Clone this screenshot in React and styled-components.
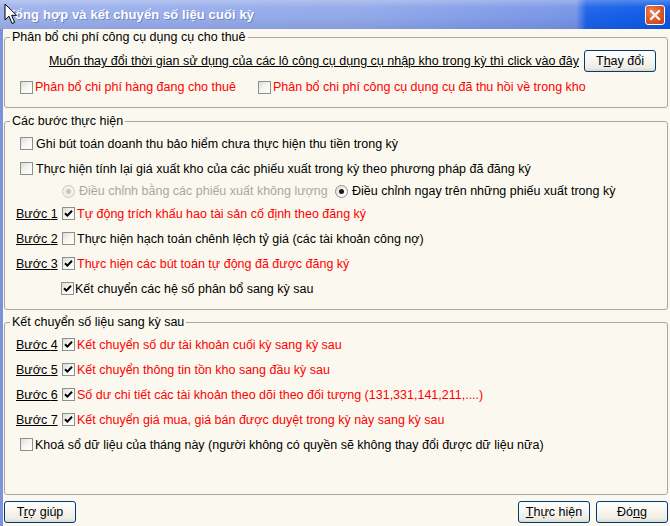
import React from 'react'
import styled, { createGlobalStyle } from 'styled-components'

const GlobalStyle = createGlobalStyle`
  html, body {
    margin: 0;
    padding: 0;
    background: #fbf9ef;
  }
`

const Win = styled.div`
  position: relative;
  width: 670px;
  height: 526px;
  overflow: hidden;
  display: flex;
  flex-direction: column;
  background: #fbf9ef;
  font-family: 'Liberation Sans', Arial, sans-serif;
  font-size: 12.5px;
  color: #000;
`

const TitleBar = styled.div`
  height: 29px;
  flex: none;
  display: flex;
  align-items: center;
  justify-content: space-between;
  padding: 0 5px 0 7px;
  box-sizing: border-box;
  background:
    linear-gradient(to bottom, rgba(255, 255, 255, 0.28) 0%, rgba(255, 255, 255, 0.05) 25%, rgba(0, 0, 0, 0) 60%, rgba(0, 0, 40, 0.08) 100%),
    linear-gradient(to right, #9db2ec 0%, #91a8e9 55%, #7794e6 86%, #1c62e8 87.5%, #0a58e6 100%);
`

const TitleText = styled.div`
  font-weight: bold;
  font-size: 13px;
  color: #fff;
  text-shadow: 1px 1px 0 rgba(30, 50, 130, 0.35);
  letter-spacing: 0.1px;
`

const CloseBtn = styled.div`
  width: 20px;
  height: 20px;
  box-sizing: border-box;
  border: 1px solid #fff;
  border-radius: 3px;
  background: radial-gradient(circle at 35% 35%, #ef8a63 0%, #e05a2c 45%, #c2400f 100%);
  display: flex;
  align-items: center;
  justify-content: center;
`

const Cursor = styled.svg`
  position: absolute;
  left: 4px;
  top: 3px;
`

const Body = styled.div`
  flex: 1;
  display: flex;
  flex-direction: column;
  border-left: 3px solid #7a92e0;
  padding: 1px 2px 0 1px;
`

const Group = styled.fieldset`
  margin: ${(p) => p.$mt || 0}px 0 0 0;
  padding: ${(p) => p.$pt || 0}px 0 ${(p) => p.$pb || 0}px 0;
  border: 1px solid #a9a79c;
  border-radius: 3px;
  min-width: 0;
  flex: ${(p) => (p.$grow ? 1 : 'none')};
  display: flex;
  flex-direction: column;
`

const Legend = styled.legend`
  margin-left: 5px;
  padding: 0 2px;
  line-height: 15px;
  font-size: 12.5px;
`

const LinkRow = styled.div`
  height: 22px;
  display: flex;
  align-items: center;
  justify-content: flex-end;
  gap: 5px;
  padding-right: 11px;
`

const LinkText = styled.span`
  text-decoration: underline;
  white-space: nowrap;
`

const OptRow = styled.div`
  height: ${(p) => p.$h || 25}px;
  margin-top: ${(p) => p.$mt || 0}px;
  display: flex;
  align-items: center;
  padding-left: ${(p) => p.$pl || 15}px;
  white-space: nowrap;
`

const Opt = styled.label`
  display: inline-flex;
  align-items: center;
  gap: ${(p) => (p.$gap === undefined ? 2 : p.$gap)}px;
  width: ${(p) => (p.$w ? `${p.$w}px` : 'auto')};
  color: ${(p) => (p.$red ? '#ff0000' : p.$off ? '#aca899' : '#000')};
`

const Box = styled.span`
  width: 13px;
  height: 13px;
  box-sizing: border-box;
  flex: none;
  border: 1px solid #8e8f8f;
  background: linear-gradient(135deg, #dcdcd5 0%, #f4f4f0 45%, #ffffff 100%);
  display: inline-flex;
  align-items: center;
  justify-content: center;
`

const RadioDot = styled.span`
  width: 13px;
  height: 13px;
  box-sizing: border-box;
  flex: none;
  border-radius: 50%;
  border: 1px solid ${(p) => (p.$off ? '#cbc9bd' : '#8e8f8f')};
  background: ${(p) =>
    p.$off ? '#f3f2ea' : 'linear-gradient(135deg, #dcdcd5 0%, #ffffff 80%)'};
  display: inline-flex;
  align-items: center;
  justify-content: center;
  &::after {
    content: '';
    width: 5px;
    height: 5px;
    border-radius: 50%;
    background: ${(p) => (p.$off ? '#c9c7ba' : '#1a1a1a')};
    display: ${(p) => (p.$on || p.$off ? 'block' : 'none')};
  }
`

const Step = styled.span`
  width: 46px;
  flex: none;
  text-decoration: underline;
`

const ButtonBar = styled.div`
  flex: none;
  height: 22px;
  margin: 6px 0 3px 0;
  display: flex;
  align-items: center;
  gap: 6px;
`

const PushButton = styled.button`
  width: 72px;
  height: 22px;
  flex: none;
  box-sizing: border-box;
  border: 1px solid #003c74;
  border-radius: 3px;
  background: linear-gradient(to bottom, #ffffff 0%, #f7f6f1 45%, #ecebe4 85%, #d9d7cc 100%);
  font-family: inherit;
  font-size: 12.5px;
  color: #000;
  padding: 0;
  margin-left: ${(p) => (p.$push ? 'auto' : '0')};
`

const U = styled.span`
  text-decoration: underline;
`

const Check = ({ on }) => (
  <Box>
    {on && (
      <svg width="9" height="9" viewBox="0 0 9 9">
        <path d="M1 4.2 L3.4 6.6 L8 1.8" fill="none" stroke="#000" strokeWidth="2" />
      </svg>
    )}
  </Box>
)

const stepsA = [
  { n: 1, on: true, red: true, text: 'Tự động trích khấu hao tài sản cố định theo đăng ký' },
  { n: 2, on: false, red: false, text: 'Thực hiện hạch toán chênh lệch tỷ giá (các tài khoản công nợ)' },
  { n: 3, on: true, red: true, text: 'Thực hiện các bút toán tự động đã được đăng ký' },
]

const stepsB = [
  { n: 4, text: 'Kết chuyển số dư tài khoản cuối kỳ sang kỳ sau' },
  { n: 5, text: 'Kết chuyển thông tin tồn kho sang đầu kỳ sau' },
  { n: 6, text: 'Số dư chi tiết các tài khoản theo dõi theo đối tượng (131,331,141,211,....)' },
  { n: 7, text: 'Kết chuyển giá mua, giá bán được duyệt trong kỳ này sang kỳ sau' },
]

const App = () => {
  return (
    <>
      <GlobalStyle />
      <Win>
        <TitleBar>
          <TitleText>Tổng hợp và kết chuyển số liệu cuối kỳ</TitleText>
          <CloseBtn>
            <svg width="12" height="12" viewBox="0 0 12 12">
              <path d="M2 2 L10 10 M10 2 L2 10" stroke="#fff" strokeWidth="2.2" strokeLinecap="square" />
            </svg>
          </CloseBtn>
        </TitleBar>

        <Body>
          <Group $pt={5} $pb={12}>
            <Legend>Phân bổ chi phí công cụ dụng cụ cho thuê</Legend>
            <LinkRow>
              <LinkText>
                Muốn thay đổi thời gian sử dụng của các lô công cụ dụng cụ nhập kho trong kỳ thì click vào đây
              </LinkText>
              <PushButton>
                T<U>h</U>ay đổi
              </PushButton>
            </LinkRow>
            <OptRow $h={16} $mt={7}>
              <Opt $w={238} $red>
                <Check />
                Phân bổ chi phí hàng đang cho thuê
              </Opt>
              <Opt $red>
                <Check />
                Phân bổ chi phí công cụ dụng cụ đã thu hồi về trong kho
              </Opt>
            </OptRow>
          </Group>

          <Group $mt={6} $pt={2} $pb={8}>
            <Legend>Các bước thực hiện</Legend>
            <OptRow>
              <Opt $gap={3}>
                <Check />
                Ghi bút toán doanh thu bảo hiểm chưa thực hiện thu tiền trong kỳ
              </Opt>
            </OptRow>
            <OptRow>
              <Opt $gap={3}>
                <Check />
                Thực hiện tính lại giá xuất kho của các phiếu xuất trong kỳ theo phương pháp đã đăng ký
              </Opt>
            </OptRow>
            <OptRow $h={20} $pl={57}>
              <Opt $w={273} $gap={4} $off>
                <RadioDot $off />
                Điều chỉnh bằng các phiếu xuất không lượng
              </Opt>
              <Opt $gap={4}>
                <RadioDot $on />
                Điều chỉnh ngay trên những phiếu xuất trong kỳ
              </Opt>
            </OptRow>
            {stepsA.map((s) => (
              <OptRow key={s.n} $pl={11}>
                <Step>Bước {s.n}</Step>
                <Opt $red={s.red}>
                  <Check on={s.on} />
                  {s.text}
                </Opt>
              </OptRow>
            ))}
            <OptRow $pl={56}>
              <Opt $gap={1}>
                <Check on />
                Kết chuyển các hệ số phân bổ sang kỳ sau
              </Opt>
            </OptRow>
          </Group>

          <Group $mt={5} $pt={2} $grow>
            <Legend>Kết chuyển số liệu sang kỳ sau</Legend>
            {stepsB.map((s) => (
              <OptRow key={s.n} $pl={11}>
                <Step>Bước {s.n}</Step>
                <Opt $red>
                  <Check on />
                  {s.text}
                </Opt>
              </OptRow>
            ))}
            <OptRow>
              <Opt>
                <Check />
                Khoá sổ dữ liệu của tháng này (người không có quyền sẽ không thay đổi được dữ liệu nữa)
              </Opt>
            </OptRow>
          </Group>

          <ButtonBar>
            <PushButton>
              T<U>r</U>ợ giúp
            </PushButton>
            <PushButton $push>
              <U>T</U>hực hiện
            </PushButton>
            <PushButton>
              Đó<U>n</U>g
            </PushButton>
          </ButtonBar>
        </Body>

        <Cursor width="14" height="23" viewBox="0 0 14 23">
          <path d="M1 1 L1 17 L5 13.2 L8 20.5 L10.6 19.4 L7.6 12.3 L12.6 12.3 Z" fill="#fff" stroke="#000" strokeWidth="1" strokeLinejoin="miter" />
        </Cursor>
      </Win>
    </>
  )
}

export default App
